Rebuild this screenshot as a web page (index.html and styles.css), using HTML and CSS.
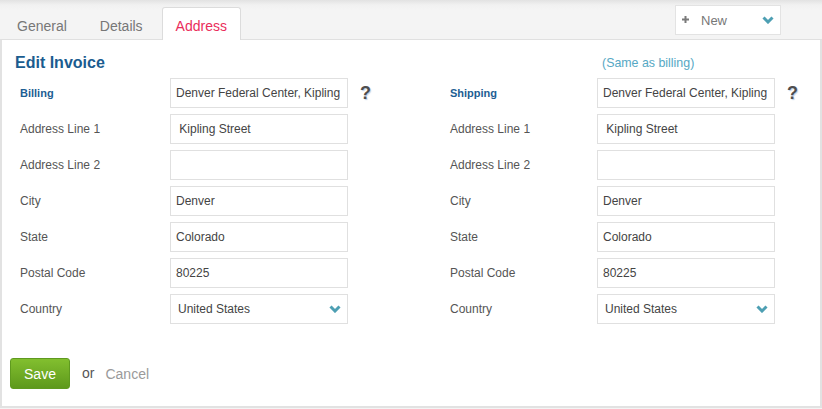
FILE: index.html
```html
<!DOCTYPE html>
<html>
<head>
<meta charset="utf-8">
<link rel="stylesheet" href="styles.css">
</head>
<body>
<div class="topbar">
  <div class="tabs">
    <div class="tab">General</div>
    <div class="tab">Details</div>
    <div class="tab active">Address</div>
  </div>
  <div class="newbtn">
    <svg class="plus" width="7" height="7" viewBox="0 0 7 7"><rect x="2.5" y="0" width="2" height="7" fill="#7a7a7a"/><rect x="0" y="2.5" width="7" height="2" fill="#7a7a7a"/></svg>
    <span class="newlabel">New</span>
    <svg class="chev" width="12" height="8" viewBox="0 0 12 8"><polyline points="1.5,1.5 6,6 10.5,1.5" fill="none" stroke="#4d9fb3" stroke-width="3"/></svg>
  </div>
</div>
<div class="panel">
  <div class="form">
    <h2 class="title">Edit Invoice</h2>
    <a class="same">(Same as billing)</a>

    <div class="label strong">Billing</div>
    <input class="field" value="Denver Federal Center, Kipling Street, Denver, CO 80225">
    <div class="help">?</div>
    <div class="label strong">Shipping</div>
    <input class="field" value="Denver Federal Center, Kipling Street, Denver, CO 80225">
    <div class="help">?</div>

    <div class="label">Address Line 1</div>
    <input class="field" value=" Kipling Street">
    <div></div>
    <div class="label">Address Line 1</div>
    <input class="field" value=" Kipling Street">
    <div></div>

    <div class="label">Address Line 2</div>
    <input class="field" value="">
    <div></div>
    <div class="label">Address Line 2</div>
    <input class="field" value="">
    <div></div>

    <div class="label">City</div>
    <input class="field" value="Denver">
    <div></div>
    <div class="label">City</div>
    <input class="field" value="Denver">
    <div></div>

    <div class="label">State</div>
    <input class="field" value="Colorado">
    <div></div>
    <div class="label">State</div>
    <input class="field" value="Colorado">
    <div></div>

    <div class="label">Postal Code</div>
    <input class="field" value="80225">
    <div></div>
    <div class="label">Postal Code</div>
    <input class="field" value="80225">
    <div></div>

    <div class="label">Country</div>
    <div class="select"><span>United States</span><svg width="12" height="8" viewBox="0 0 12 8"><polyline points="1.5,1.5 6,6 10.5,1.5" fill="none" stroke="#4d9fb3" stroke-width="3"/></svg></div>
    <div></div>
    <div class="label">Country</div>
    <div class="select"><span>United States</span><svg width="12" height="8" viewBox="0 0 12 8"><polyline points="1.5,1.5 6,6 10.5,1.5" fill="none" stroke="#4d9fb3" stroke-width="3"/></svg></div>
    <div></div>
  </div>
  <div class="actions">
    <button class="save">Save</button>
    <span class="or">or</span>
    <a class="cancel">Cancel</a>
  </div>
</div>
</body>
</html>
```
FILE: styles.css
```css
* { box-sizing: border-box; }
html, body { margin: 0; padding: 0; }
body {
  width: 822px;
  height: 409px;
  overflow: hidden;
  font-family: "Liberation Sans", Arial, sans-serif;
  background: #f4f4f4;
}
.topbar {
  height: 39px;
  display: flex;
  align-items: flex-start;
  background: linear-gradient(#e2e2e2 0, #f1f1f1 5px, #f4f4f4 10px, #f4f4f4 100%);
}
.tabs {
  display: flex;
  align-items: flex-end;
  padding-left: 3px;
  height: 40px;
  gap: 5px;
  position: relative;
  z-index: 2;
}
.tab {
  height: 33px;
  padding: 3px 13px 0;
  line-height: 30px;
  font-size: 14px;
  color: #777;
  border: 1px solid transparent;
  border-bottom: none;
  border-radius: 3px 3px 0 0;
}
.tab.active {
  background: #fff;
  border-color: #dcdcdc;
  color: #ea2d5b;
}
.newbtn {
  margin-left: auto;
  margin-right: 41px;
  margin-top: 5px;
  width: 106px;
  height: 30px;
  background: #fff;
  border: 1px solid #e3e3e3;
  display: flex;
  align-items: center;
  padding: 0 6px 0 6px;
}
.plus { margin-right: 12px; margin-top: -1px; }
.newlabel { font-size: 13px; color: #777; flex: 1; }
.chev { margin-top: -1px; }
.panel {
  height: 369px;
  background: #fff;
  border: 2px solid #e2e2e2;
  border-top: 1px solid #e0e0e0;
  padding-top: 13px;
}
.form {
  display: grid;
  grid-template-columns: 150px 178px 102px 147px 178px 1fr;
  grid-template-rows: 19px repeat(7, 30px);
  row-gap: 6px;
  padding-left: 18px;
  align-items: center;
}
.title {
  grid-column: 1 / 5;
  margin: 0 0 0 -5px;
  font-size: 16px;
  font-weight: bold;
  color: #1b5c8f;
  line-height: 19px;
}
.same {
  grid-column: 5 / 7;
  padding-left: 5px;
  font-size: 12.4px;
  color: #56a8c4;
  line-height: 19px;
  padding-top: 2px;
}
.label {
  font-size: 12px;
  color: #555;
}
.label.strong {
  font-size: 11px;
  font-weight: bold;
  color: #1d5e93;
}
.field {
  width: 178px;
  height: 30px;
  border: 1px solid #e0e0e0;
  padding: 0 5px;
  font-family: "Liberation Sans", Arial, sans-serif;
  font-size: 12px;
  color: #444;
  background: #fff;
  outline: none;
  margin: 0;
  white-space: pre;
}
.help {
  padding-left: 12px;
  font-size: 18px;
  font-weight: bold;
  color: #4e4e4e;
  text-shadow: 1px 1px 1px rgba(110,150,200,0.45);
  line-height: 18px;
}
.select {
  width: 178px;
  height: 30px;
  border: 1px solid #e0e0e0;
  display: flex;
  align-items: center;
  justify-content: space-between;
  padding: 0 6px 0 7px;
  font-size: 12px;
  color: #444;
}
.actions {
  display: flex;
  align-items: center;
  padding-left: 8px;
  margin-top: 34px;
}
.save {
  width: 60px;
  height: 31px;
  border: 1px solid #5f9a1f;
  border-radius: 3px;
  background: linear-gradient(#82bf2f, #5e991c);
  color: #fff;
  font-family: "Liberation Sans", Arial, sans-serif;
  font-size: 14px;
  padding: 0;
  margin: 0;
}
.or {
  margin-left: 12px;
  font-size: 14px;
  color: #555;
  margin-top: -2px;
}
.cancel {
  margin-left: 11px;
  font-size: 14px;
  color: #9a9a9a;
}
```
